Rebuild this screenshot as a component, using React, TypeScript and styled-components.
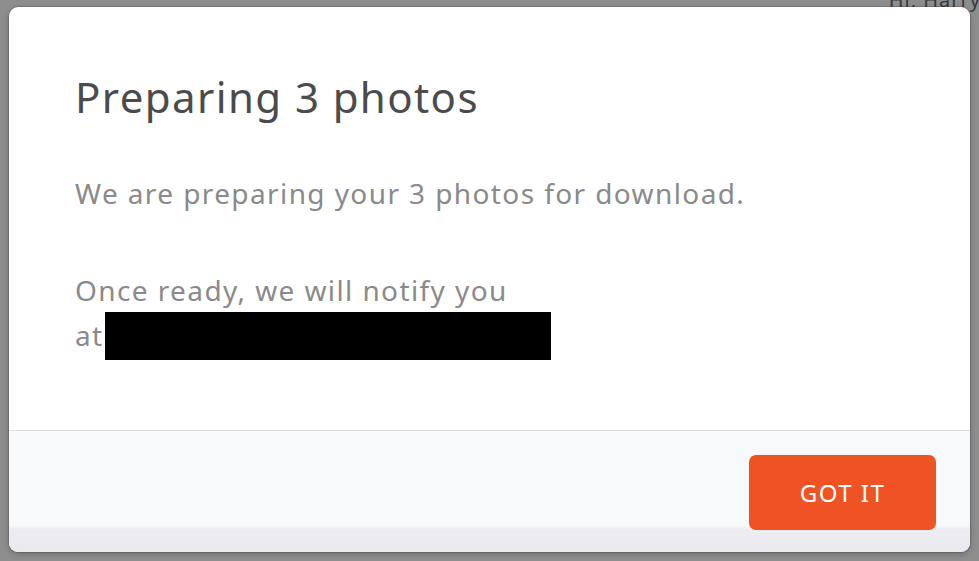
import styled, { createGlobalStyle } from "styled-components";

const GlobalStyle = createGlobalStyle`
  html, body {
    margin: 0;
    padding: 0;
    background: #8e8e8e;
  }
  * {
    box-sizing: border-box;
  }
`;

const App = () => {
  return (
    <Backdrop>
      <GlobalStyle />
      <PeekText>Hi, Harry</PeekText>
      <Modal>
        <Body>
          <Title>Preparing 3 photos</Title>
          <Text>We are preparing your 3 photos for download.</Text>
          <Text>
            Once ready, we will notify you{" "}
            <NoWrap>
              at
              <Redacted />
            </NoWrap>
          </Text>
        </Body>
        <Footer>
          <Button>GOT IT</Button>
        </Footer>
      </Modal>
    </Backdrop>
  );
};
export default App;

const Backdrop = styled.div`
  width: 979px;
  height: 561px;
  position: relative;
  overflow: hidden;
  padding: 7px 9px 9px 9px;
  background: #8e8e8e;
`;

const PeekText = styled.div`
  position: absolute;
  top: -14px;
  right: -2px;
  color: #3a3a3a;
  font-family: "Noto Sans", sans-serif;
  font-size: 20px;
  letter-spacing: 1px;
`;

const Modal = styled.div`
  position: relative;
  width: 961px;
  height: 545px;
  display: flex;
  flex-direction: column;
  background: #ffffff;
  border-radius: 9px;
  overflow: hidden;
  box-shadow: 0 0 0 1px rgba(0, 0, 0, 0.12), 0 2px 6px rgba(0, 0, 0, 0.25);
`;

const Body = styled.div`
  flex: 1;
  padding: 62px 66px 0 66px;
  font-family: "Noto Sans", sans-serif;
`;

const Title = styled.h1`
  margin: 0 0 47px 0;
  color: #4b4b4b;
  font-size: 42px;
  font-weight: 400;
  line-height: 56px;
  letter-spacing: 1.4px;
`;

const Text = styled.p`
  margin: 0 0 54px 0;
  color: #8a8a8a;
  font-size: 28px;
  font-weight: 400;
  line-height: 43px;
  letter-spacing: 1.4px;
`;

const NoWrap = styled.span`
  white-space: nowrap;
`;

const Redacted = styled.span`
  display: inline-block;
  width: 446px;
  height: 48px;
  margin-left: 1px;
  vertical-align: -14px;
  background: #000000;
`;

const Footer = styled.div`
  height: 122px;
  display: flex;
  justify-content: flex-end;
  align-items: flex-start;
  padding: 24px 34px 0 0;
  border-top: 1px solid #dcdde0;
  background: linear-gradient(
    to bottom,
    #f8f9fb 0,
    #f8f9fb 94px,
    #ececf1 99px,
    #e9e9ef 100%
  );
`;

const Button = styled.button`
  width: 187px;
  height: 75px;
  border: none;
  border-radius: 7px;
  background: #f05323;
  color: #ffffff;
  font-family: "Noto Sans", sans-serif;
  font-size: 24px;
  font-weight: 400;
  letter-spacing: 1.5px;
  cursor: pointer;
`;
